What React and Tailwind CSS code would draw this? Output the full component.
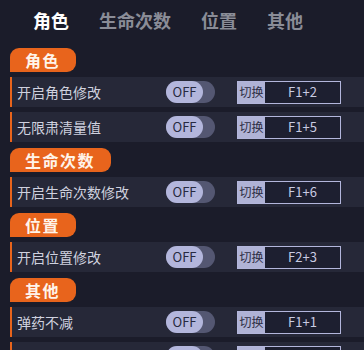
const sections = [
  {
    title: '角色',
    items: [
      { name: '开启角色修改', key: 'F1+2' },
      { name: '无限肃清量值', key: 'F1+5' },
    ],
  },
  {
    title: '生命次数',
    items: [{ name: '开启生命次数修改', key: 'F1+6' }],
  },
  {
    title: '位置',
    items: [{ name: '开启位置修改', key: 'F2+3' }],
  },
  {
    title: '其他',
    items: [
      { name: '弹药不减', key: 'F1+1' },
      { name: '无限手雷', key: 'F1+3' },
    ],
  },
];

const tabs = ['角色', '生命次数', '位置', '其他'];

const Toggle = () => (
  <div className="flex h-[22px] w-[49px] items-center rounded-full bg-[#545772]">
    <div className="flex h-[22px] w-[37px] items-center justify-center rounded-full bg-[#b3b6dc] text-[13px] text-[#272a40]">
      OFF
    </div>
  </div>
);

const KeyBox = ({ value }) => (
  <div className="flex h-[23px] w-[104px] border border-[#b3b6dc] bg-[#1d1f30]">
    <div className="flex w-[27px] items-center justify-center bg-[#b0b3d6] text-[12px] text-[#2c2e44]">
      切换
    </div>
    <div className="flex flex-1 items-center justify-center text-[13px] text-[#c9cbe2]">{value}</div>
  </div>
);

const Row = ({ item }) => (
  <div className="flex h-[30px] items-center border-l-2 border-[#e8641c] bg-[#262838]">
    <div className="w-[154px] pl-[5px] text-[14px] text-[#cfd1df]">{item.name}</div>
    <Toggle />
    <div className="w-[22px]" />
    <KeyBox value={item.key} />
  </div>
);

export default function App() {
  return (
    <div
      className="h-[350px] w-[364px] overflow-hidden bg-[#1b1c2a]"
      style={{ fontFamily: '"Noto Sans CJK SC", "Noto Sans", sans-serif' }}
    >
      <div className="flex h-[39px] items-center pl-[33px] text-[18px] font-bold">
        {tabs.map((t, i) => (
          <div
            key={t}
            className={`${i === 0 ? 'text-white' : 'text-[#8a8c97]'} mr-[30px] leading-none`}
          >
            {t}
          </div>
        ))}
      </div>
      <div className="flex flex-col pl-[10px] pt-[9px]">
        {sections.map((s) => (
          <div key={s.title} className="mb-[6px] flex flex-col">
            <div className="flex">
              <div className="flex h-[24px] items-center rounded-tl-[9px] rounded-tr-[9px] rounded-br-[9px] bg-[#e8641c] pl-[15px] pr-[16px] text-[16px] font-bold tracking-[1.5px] text-[#fff4ea]">
                {s.title}
              </div>
            </div>
            <div className="mt-[5px] flex flex-col gap-[5px]">
              {s.items.map((it) => (
                <Row key={it.name} item={it} />
              ))}
            </div>
          </div>
        ))}
      </div>
    </div>
  );
}
